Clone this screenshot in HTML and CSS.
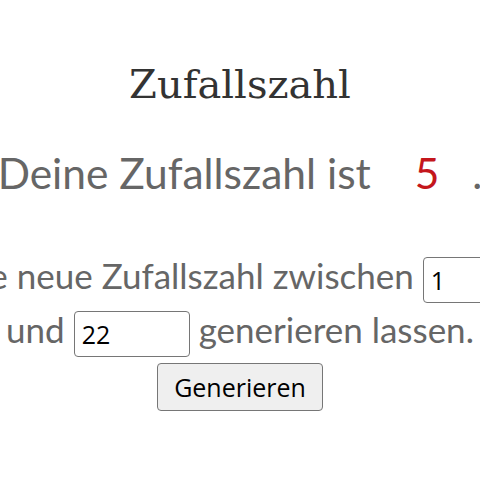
FILE: index.html
```html
<!DOCTYPE html>
<html lang="de">
<head>
  <meta charset="UTF-8">
  <meta name="viewport" content="width=device-width, initial-scale=1.0">
  <title>Zufallszahl</title>
  <link rel="stylesheet" href="styles.css">
</head>
<body>

  <!-- Main -->
  <main class="page">
    <h1 class="title">Zufallszahl</h1>

    <p class="result">Deine Zufallszahl ist <span class="number">5</span>.</p>

    <!-- Form -->
    <form class="generator">
      <p class="range">
        Eine neue Zufallszahl zwischen
        <input type="text" class="field" value="1">
        und
        <input type="text" class="field" value="22">
        generieren lassen.
      </p>
      <button type="submit" class="submit">Generieren</button>
    </form>
  </main>

</body>
</html>
```

FILE: styles.css
```css
body {
  margin: 0;
  display: flex;
  justify-content: center;
  overflow: hidden;
  background: #fff;
  font-family: 'Lato', sans-serif;
  color: #666;
}

.page {
  flex: none;
  width: 640px;
  text-align: center;
}

.title {
  margin: 60px 0 0;
  font-family: 'DejaVu Serif', serif;
  font-size: 40px;
  font-weight: normal;
  line-height: 48px;
  color: #333;
}

.result {
  margin: 41px 0 0;
  font-size: 42.5px;
  line-height: 48px;
}

.number {
  padding: 0 33px;
  color: #c4161c;
}

.range {
  margin: 52px 0 0;
  font-size: 35px;
  line-height: 52px;
}

.field {
  width: 116px;
  height: 46px;
  padding: 0 7px;
  box-sizing: border-box;
  font-family: 'Open Sans', sans-serif;
  font-size: 25px;
  color: #000;
  border: 1px solid #767676;
  border-radius: 4px;
  vertical-align: middle;
}

.submit {
  margin-top: 6px;
  padding: 6px 16px;
  font-family: 'Open Sans', sans-serif;
  font-size: 25px;
  color: #000;
  background: #efefef;
  border: 1px solid #767676;
  border-radius: 4px;
}
```
